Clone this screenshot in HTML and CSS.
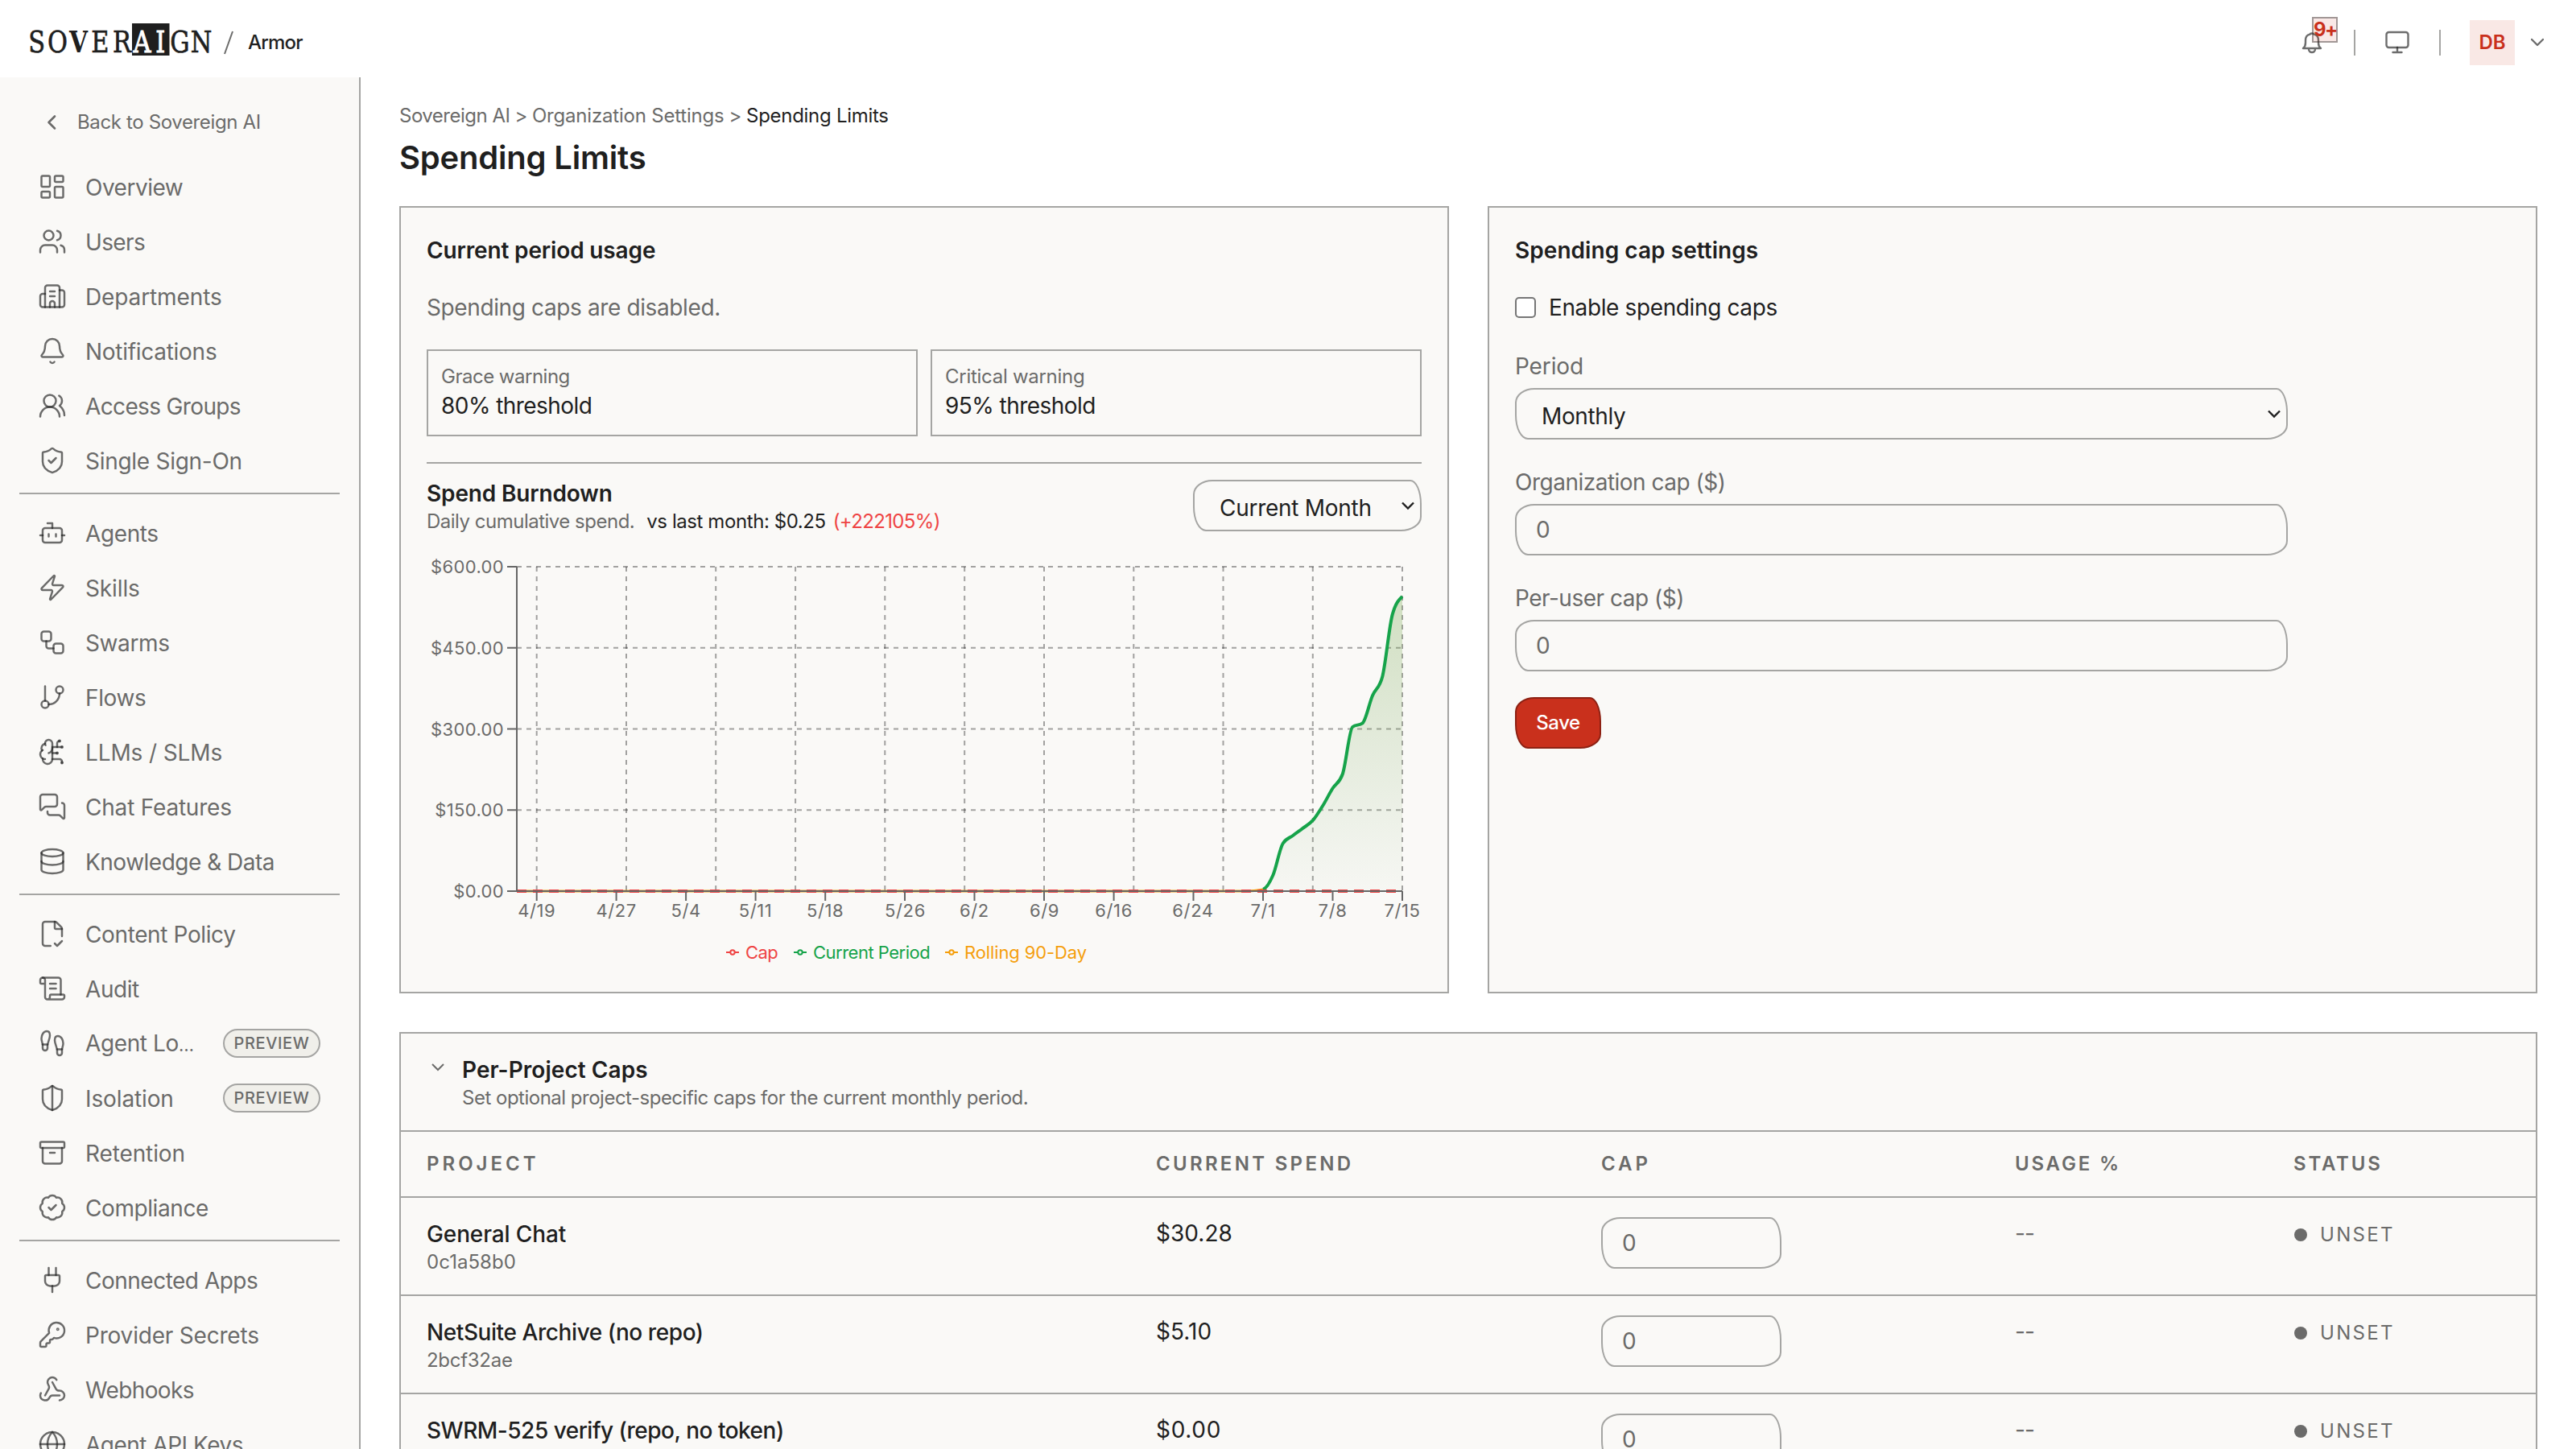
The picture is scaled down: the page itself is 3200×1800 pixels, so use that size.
FILE: index.html
```html
<!DOCTYPE html>
<html lang="en">
<head>
<meta charset="utf-8">
<title>Spending Limits</title>
<link rel="stylesheet" href="styles.css">
</head>
<body>
<header class="topbar">
  <svg class="logo" viewBox="36 29 228 48">
    <rect x="164" y="29" width="46.5" height="40" class="logo-box"/>
    <g transform="scale(.8 1)">
      <text y="65.5" class="logo-text"><tspan x="57">S</tspan><tspan x="89.4">O</tspan><tspan x="121.9" class="heavy">V</tspan><tspan x="155.6">E</tspan><tspan x="189.4">R</tspan><tspan x="220.6" class="inv">A</tspan><tspan x="249" class="inv">I</tspan><tspan x="279.4">G</tspan><tspan x="312.500">N</tspan></text>
    </g>
  </svg>
  <svg class="slash" viewBox="0 0 12 30"><path d="M1 29L11 1"/></svg>
  <span class="product">Armor</span>
  <div class="tools">
    <div class="bell">
      <svg viewBox="0 0 32 32"><path d="M5 23c2-1.500 3-3.500 3-7v-3c0-4 2-6.500 5.500-7.300c.3-1.700 4.700-1.700 5 0C22 6.500 24 9 24 13v3c0 3.500 1 5.500 3 7zM12 24c0 5.300 8 5.300 8 0"/></svg>
      <span class="badge">9+</span>
    </div>
    <i class="sep sep-a"></i>
    <svg class="monitor" viewBox="0 0 36 36"><rect x="4.500" y="5" width="27" height="19" rx="3"/><path d="M18 24v6M12.500 30h11"/></svg>
    <i class="sep sep-b"></i>
    <span class="avatar">DB</span>
    <svg class="caret" viewBox="0 0 16 12"><path d="M1 2l7 7 7-7"/></svg>
  </div>
</header>

<div class="shell">
  <nav class="sidebar">
    <a class="back"><svg viewBox="0 0 24 24"><path d="M16 4.500L8.500 12l7.500 7.500"/></svg><span>Back to Sovereign AI</span></a>
    <div class="group">
      <a class="item"><svg viewBox="0 0 24 24"><rect width="7" height="9" x="3" y="3" rx="1"/><rect width="7" height="5" x="14" y="3" rx="1"/><rect width="7" height="9" x="14" y="12" rx="1"/><rect width="7" height="5" x="3" y="16" rx="1"/></svg><span class="t5">Overview</span></a>
      <a class="item"><svg viewBox="0 0 24 24"><path d="M16 21v-2a4 4 0 0 0-4-4H6a4 4 0 0 0-4 4v2"/><circle cx="9" cy="7" r="4"/><path d="M22 21v-2a4 4 0 0 0-3-3.870M16 3.130a4 4 0 0 1 0 7.750"/></svg><span class="t6">Users</span></a>
      <a class="item"><svg viewBox="0 0 24 24"><path d="M10 12h4"/><path d="M10 8h4"/><path d="M14 21v-3a2 2 0 0 0-4 0v3"/><path d="M6 10H4a2 2 0 0 0-2 2v7a2 2 0 0 0 2 2h16a2 2 0 0 0 2-2V9a2 2 0 0 0-2-2h-2"/><path d="M6 21V5a2 2 0 0 1 2-2h8a2 2 0 0 1 2 2v16"/></svg><span class="t1">Departments</span></a>
      <a class="item"><svg viewBox="0 0 24 24"><path d="M10.268 21a2 2 0 0 0 3.464 0"/><path d="M3.262 15.326A1 1 0 0 0 4 17h16a1 1 0 0 0 .740-1.673C19.410 13.956 18 12.499 18 8A6 6 0 0 0 6 8c0 4.499-1.411 5.956-2.738 7.326"/></svg><span class="t3">Notifications</span></a>
      <a class="item"><svg viewBox="0 0 24 24"><path d="M18 21a8 8 0 0 0-16 0"/><circle cx="10" cy="8" r="5"/><path d="M22 20c0-3.370-2-6.500-4-8a5 5 0 0 0-.450-8.300"/></svg><span class="t6">Access Groups</span></a>
      <a class="item"><svg viewBox="0 0 24 24"><path d="M20 13c0 5-3.500 7.500-7.660 8.950a1 1 0 0 1-.670-.010C7.500 20.500 4 18 4 13V6a1 1 0 0 1 1-1c2 0 4.500-1.200 6.240-2.720a1.170 1.170 0 0 1 1.520 0C14.510 3.810 17 5 19 5a1 1 0 0 1 1 1z"/><path d="m9 12 2 2 4-4"/></svg><span class="t3">Single Sign-On</span></a>
    </div>
    <div class="group">
      <a class="item"><svg viewBox="0 0 24 24"><path d="M12 8V4H8"/><rect width="16" height="12" x="4" y="8" rx="2"/><path d="M2 14h2"/><path d="M20 14h2"/><path d="M15 13v2M9 13v2"/></svg><span>Agents</span></a>
      <a class="item"><svg viewBox="0 0 24 24"><path d="M4 14a1 1 0 0 1-.780-1.630l9.900-10.200a.5.5 0 0 1 .860.460l-1.920 6.020A1 1 0 0 0 13 10h7a1 1 0 0 1 .780 1.630l-9.900 10.200a.5.5 0 0 1-.860-.460l1.920-6.020A1 1 0 0 0 11 14z"/></svg><span class="t1">Skills</span></a>
      <a class="item"><svg viewBox="0 0 24 24"><rect width="8" height="8" x="3" y="3" rx="2"/><path d="M7 11v4a2 2 0 0 0 2 2h4"/><rect width="8" height="8" x="13" y="13" rx="2"/></svg><span>Swarms</span></a>
      <a class="item"><svg viewBox="0 0 24 24"><path d="M6 3v12"/><circle cx="18" cy="6" r="3"/><circle cx="6" cy="18" r="3"/><path d="M18 9a9 9 0 0 1-9 9"/></svg><span>Flows</span></a>
      <a class="item"><svg viewBox="0 0 24 24"><path d="M12 5a3 3 0 1 0-5.997.125 4 4 0 0 0-2.526 5.770 4 4 0 0 0 .556 6.588A4 4 0 1 0 12 18Z"/><path d="M9 13a4.500 4.500 0 0 0 3-4"/><path d="M6.003 5.125A3 3 0 0 0 6.401 6.500"/><path d="M3.477 10.896a4 4 0 0 1 .585-.396"/><path d="M6 18a4 4 0 0 1-1.967-.516"/><path d="M12 13h4"/><path d="M12 18h6a2 2 0 0 1 2 2v1"/><path d="M12 8h8"/><path d="M16 8V5a2 2 0 0 1 2-2"/><circle cx="16" cy="13" r=".5"/><circle cx="18" cy="3" r=".5"/><circle cx="20" cy="21" r=".5"/><circle cx="20" cy="8" r=".5"/></svg><span class="t1">LLMs / SLMs</span></a>
      <a class="item"><svg viewBox="0 0 24 24"><path d="M16 10a2 2 0 0 1-2 2H6.828a2 2 0 0 0-1.414.586l-2.202 2.202A.710.710 0 0 1 2 14.286V4a2 2 0 0 1 2-2h10a2 2 0 0 1 2 2z"/><path d="M20 9a2 2 0 0 1 2 2v10.286a.710.710 0 0 1-1.212.502l-2.202-2.202A2 2 0 0 0 17.172 19H10a2 2 0 0 1-2-2v-1"/></svg><span class="t2">Chat Features</span></a>
      <a class="item"><svg viewBox="0 0 24 24"><ellipse cx="12" cy="5" rx="9" ry="3"/><path d="M3 5V19A9 3 0 0 0 21 19V5"/><path d="M3 12A9 3 0 0 0 21 12"/></svg><span class="t5">Knowledge &amp; Data</span></a>
    </div>
    <div class="group">
      <a class="item"><svg viewBox="0 0 24 24"><path d="M10.500 22H6a2 2 0 0 1-2-2V4a2 2 0 0 1 2-2h8a2.400 2.400 0 0 1 1.706.706l3.588 3.588A2.400 2.400 0 0 1 20 8v6"/><path d="M14 2v5a1 1 0 0 0 1 1h5"/><path d="m14 20 2 2 4-4"/></svg><span>Content Policy</span></a>
      <a class="item"><svg viewBox="0 0 24 24"><path d="M15 12h-5"/><path d="M15 8h-5"/><path d="M19 17V5a2 2 0 0 0-2-2H4"/><path d="M8 21h12a2 2 0 0 0 2-2v-1a1 1 0 0 0-1-1H11a1 1 0 0 0-1 1v1a2 2 0 1 1-4 0V5a2 2 0 1 0-4 0v2a1 1 0 0 0 1 1h3"/></svg><span class="t4">Audit</span></a>
      <a class="item"><svg viewBox="0 0 24 24"><path d="M4 16v-2.380C4 11.500 2.970 10.500 3 8c.030-2.720 1.490-6 4.500-6C9.370 2 10 3.800 10 5.500c0 3.110-2 5.660-2 8.680V16a2 2 0 1 1-4 0Z"/><path d="M20 20v-2.380c0-2.120 1.030-3.120 1-5.620-.030-2.720-1.490-6-4.500-6C14.630 6 14 7.800 14 9.500c0 3.110 2 5.660 2 8.680V20a2 2 0 1 0 4 0Z"/><path d="M16 17h4"/><path d="M4 13h4"/></svg><span>Agent Lo<span class="dots">…</span></span><b class="pill">PREVIEW</b></a>
      <a class="item"><svg viewBox="0 0 24 24"><path d="M20 13c0 5-3.500 7.500-7.660 8.950a1 1 0 0 1-.670-.010C7.500 20.500 4 18 4 13V6a1 1 0 0 1 1-1c2 0 4.500-1.200 6.240-2.720a1.170 1.170 0 0 1 1.520 0C14.510 3.810 17 5 19 5a1 1 0 0 1 1 1z"/><path d="M12 22V2"/></svg><span class="t1">Isolation</span><b class="pill">PREVIEW</b></a>
      <a class="item"><svg viewBox="0 0 24 24"><rect width="20" height="5" x="2" y="3" rx="1"/><path d="M4 8v11a2 2 0 0 0 2 2h12a2 2 0 0 0 2-2V8"/><path d="M10 12h4"/></svg><span class="t1">Retention</span></a>
      <a class="item"><svg viewBox="0 0 24 24"><path d="M3.850 8.620a4 4 0 0 1 4.780-4.770 4 4 0 0 1 6.740 0 4 4 0 0 1 4.780 4.780 4 4 0 0 1 0 6.740 4 4 0 0 1-4.770 4.780 4 4 0 0 1-6.750 0 4 4 0 0 1-4.780-4.770 4 4 0 0 1 0-6.760Z"/><path d="m9 12 2 2 4-4"/></svg><span class="t4">Compliance</span></a>
    </div>
    <div class="group">
      <a class="item"><svg viewBox="0 0 24 24"><path d="M12 22v-5"/><path d="M15 8V2"/><path d="M17 8a1 1 0 0 1 1 1v4a4 4 0 0 1-4 4h-4a4 4 0 0 1-4-4V9a1 1 0 0 1 1-1z"/><path d="M9 8V2"/></svg><span class="t5">Connected Apps</span></a>
      <a class="item"><svg viewBox="0 0 24 24"><path d="M2.586 17.414A2 2 0 0 0 2 18.828V21a1 1 0 0 0 1 1h3a1 1 0 0 0 1-1v-1a1 1 0 0 1 1-1h1a1 1 0 0 0 1-1v-1a1 1 0 0 1 1-1h.172a2 2 0 0 0 1.414-.586l.814-.814a6.500 6.500 0 1 0-4-4z"/><circle cx="16.500" cy="7.500" r=".5"/></svg><span class="t2">Provider Secrets</span></a>
      <a class="item"><svg viewBox="0 0 24 24"><path d="M18 16.980h-5.990c-1.100 0-1.950.940-2.480 1.900A4 4 0 0 1 2 17c.010-.700.200-1.400.570-2"/><path d="m6 17 3.130-5.780c.530-.970.100-2.180-.500-3.100a4 4 0 1 1 6.890-4.060"/><path d="m12 6 3.130 5.730C15.660 12.700 16.900 13 18 13a4 4 0 0 1 0 8"/></svg><span class="t6">Webhooks</span></a>
      <a class="item"><svg viewBox="0 0 24 24"><circle cx="12" cy="12" r="10"/><path d="M12 2a14.500 14.500 0 0 0 0 20 14.500 14.500 0 0 0 0-20"/><path d="M2 12h20"/></svg><span class="t5">Agent API Keys</span></a>
    </div>
  </nav>

  <main class="main">
    <div class="crumbs"><span class="t5">Sovereign AI</span><span>&gt;</span><span class="t2">Organization Settings</span><span>&gt;</span><span class="here t3">Spending Limits</span></div>
    <h1>Spending Limits</h1>

    <div class="cards">
      <section class="card">
        <h2>Current period usage</h2>
        <p class="note">Spending caps are disabled.</p>
        <div class="warnings">
          <div class="warning"><small class="t5">Grace warning</small><span>80% threshold</span></div>
          <div class="warning"><small class="t3">Critical warning</small><span>95% threshold</span></div>
        </div>
        <div class="burndown-head">
          <div>
            <h2>Spend Burndown</h2>
            <p class="compare"><span class="t5">Daily cumulative spend.</span><span class="dark t4">vs last month: $0.25</span><span class="red t6">(+222105%)</span></p>
          </div>
          <div class="field select range"><span class="t3">Current Month</span><svg viewBox="0 0 20 20"><path d="M3 6.500l7 7 7-7"/></svg></div>
        </div>
        <svg class="chart" viewBox="530 664 1236 503">
          <defs><linearGradient id="area" x1="0" y1="0" x2="0" y2="1"><stop offset="0" stop-color="#7fac57" stop-opacity=".34"/><stop offset="1" stop-color="#7fac6c" stop-opacity=".03"/></linearGradient></defs>
          <g class="grid">
            <path d="M642 704H1742"/><path d="M642 804.750H1742"/><path d="M642 905.500H1742"/><path d="M642 1006.250H1742"/>
            <path d="M666.700 704V1107"/><path d="M778 704V1107"/><path d="M889.200 704V1107"/><path d="M988.100 704V1107"/><path d="M1099.300 704V1107"/><path d="M1198.200 704V1107"/><path d="M1297 704V1107"/><path d="M1408.300 704V1107"/><path d="M1519.500 704V1107"/><path d="M1630.800 704V1107"/><path d="M1742 704V1107"/>
          </g>
          <path fill="url(#area)" d="M1568.970 1105C1573.090 1103.670 1577.210 1096.870 1581.330 1087.300C1585.450 1077.730 1589.570 1054.170 1593.690 1047.700C1597.810 1041.230 1601.930 1041.130 1606.050 1038C1610.170 1034.870 1614.290 1032.030 1618.410 1028.900C1622.530 1025.770 1626.650 1023.850 1630.770 1019.200C1634.890 1014.550 1639.010 1007.650 1643.130 1001C1647.250 994.350 1651.370 985.880 1655.490 979.300C1659.600 972.720 1663.720 973.370 1667.840 961.500C1671.960 949.630 1676.080 906.130 1680.200 903C1684.320 899.870 1688.440 901.430 1692.560 898.300C1696.680 895.170 1700.800 873.830 1704.920 864.200C1709.040 854.570 1713.160 856.300 1717.280 840.500C1721.400 824.700 1725.520 778.670 1729.640 763.600C1733.760 748.530 1737.880 744.770 1742 741V1107H1568.970Z"/>
          <path class="rolling" d="M642 1107H1544C1553 1107 1562 1106.500 1568.970 1105"/>
          <path class="current" d="M1568.970 1105C1573.090 1103.670 1577.210 1096.870 1581.330 1087.300C1585.450 1077.730 1589.570 1054.170 1593.690 1047.700C1597.810 1041.230 1601.930 1041.130 1606.050 1038C1610.170 1034.870 1614.290 1032.030 1618.410 1028.900C1622.530 1025.770 1626.650 1023.850 1630.770 1019.200C1634.890 1014.550 1639.010 1007.650 1643.130 1001C1647.250 994.350 1651.370 985.880 1655.490 979.300C1659.600 972.720 1663.720 973.370 1667.840 961.500C1671.960 949.630 1676.080 906.130 1680.200 903C1684.320 899.870 1688.440 901.430 1692.560 898.300C1696.680 895.170 1700.800 873.830 1704.920 864.200C1709.040 854.570 1713.160 856.300 1717.280 840.500C1721.400 824.700 1725.520 778.670 1729.640 763.600C1733.760 748.530 1737.880 744.770 1742 741"/>
          <path class="cap" d="M642 1107H1742"/>
          <path class="axis" d="M642 704V1107M642 1107H1742M630 704H642M630 804.750H642M630 905.500H642M630 1006.250H642M630 1107H642M666.700 1107v12M765.600 1107v12M852.100 1107v12M938.600 1107v12M1025.200 1107v12M1124 1107v12M1210.500 1107v12M1297 1107v12M1383.600 1107v12M1482.500 1107v12M1569 1107v12M1655.500 1107v12M1742 1107v12"/>
          <g class="ylab"><text x="626" y="712">$600.00</text><text x="626" y="812.750">$450.00</text><text x="626" y="913.500">$300.00</text><text x="626" y="1014.250">$150.00</text><text x="626" y="1115">$0.00</text></g>
          <g class="xlab"><text x="666.700" y="1139">4/19</text><text x="765.600" y="1139">4/27</text><text x="852.100" y="1139">5/4</text><text x="938.600" y="1139">5/11</text><text x="1025.200" y="1139">5/18</text><text x="1124.500" y="1139">5/26</text><text x="1210.500" y="1139">6/2</text><text x="1297.500" y="1139">6/9</text><text x="1383.600" y="1139">6/16</text><text x="1482" y="1139">6/24</text><text x="1569" y="1139">7/1</text><text x="1655.500" y="1139">7/8</text><text x="1742" y="1139">7/15</text></g>
        </svg>
        <div class="legend">
          <span class="red"><svg viewBox="0 0 16 10"><path d="M0 5h5M11 5h5"/><circle cx="8" cy="5" r="2.700"/></svg><span class="t6">Cap</span></span>
          <span class="green"><svg viewBox="0 0 16 10"><path d="M0 5h5M11 5h5"/><circle cx="8" cy="5" r="2.700"/></svg><span class="t5">Current Period</span></span>
          <span class="amber"><svg viewBox="0 0 16 10"><path d="M0 5h5M11 5h5"/><circle cx="8" cy="5" r="2.700"/></svg><span class="t1">Rolling 90-Day</span></span>
        </div>
      </section>

      <section class="card">
        <h2 class="t0">Spending cap settings</h2>
        <label class="check"><i></i><span>Enable spending caps</span></label>
        <label class="control"><span class="t1">Period</span><span class="field select"><span>Monthly</span><svg viewBox="0 0 20 20"><path d="M3 6.500l7 7 7-7"/></svg></span></label>
        <label class="control"><span class="t5">Organization cap ($)</span><input class="field" placeholder="0"></label>
        <label class="control"><span class="t5">Per-user cap ($)</span><input class="field" placeholder="0"></label>
        <button class="save">Save</button>
      </section>
    </div>

    <section class="projects">
      <div class="projects-head">
        <svg viewBox="0 0 24 24"><path d="M5 8l7 7 7-7"/></svg>
        <div><h2 class="t0">Per-Project Caps</h2><p class="t5">Set optional project-specific caps for the current monthly period.</p></div>
      </div>
      <div class="row head"><span class="p1">PROJECT</span><span class="p2">CURRENT SPEND</span><span class="p1">CAP</span><span class="p3">USAGE %</span><span class="p3">STATUS</span></div>
      <div class="row">
        <div><b class="t1">General Chat</b><small class="t0">0c1a58b0</small></div><span class="t0">$30.28</span><div class="capcell"><input class="field" placeholder="0"></div><span class="usage">--</span><span class="status"><i></i>UNSET</span>
      </div>
      <div class="row">
        <div><b class="t4">NetSuite Archive (no repo)</b><small class="t3">2bcf32ae</small></div><span class="t0">$5.10</span><div class="capcell"><input class="field" placeholder="0"></div><span class="usage">--</span><span class="status"><i></i>UNSET</span>
      </div>
      <div class="row">
        <div><b class="t5">SWRM-525 verify (repo, no token)</b></div><span class="wide">$0.00</span><div class="capcell"><input class="field" placeholder="0"></div><span class="usage">--</span><span class="status"><i></i>UNSET</span>
      </div>
    </section>
  </main>
</div>
</body>
</html>
```
FILE: styles.css
```css
:root {
  --ink: #1f1f1f;
  --muted: #6b6b6a;
  --muted-a: rgba(31, 31, 31, .65);
  --line: #a5a5a3;
  --panel: #faf9f7;
  --brand: #c9301c;
  --wobble: 24px 14px 26px 16px / 18px 30px 18px 30px;
}
* { box-sizing: border-box; margin: 0; padding: 0; }
body {
  width: 3200px; height: 1800px; overflow: hidden;
  display: flex; flex-direction: column;
  background: #fff; color: var(--ink);
  font: 400 28px/40px Inter, "Liberation Sans", sans-serif;
  letter-spacing: -.38px;
}
svg { fill: none; flex: none; display: block; }
h2 { font-size: 28px; line-height: 40px; font-weight: 600; letter-spacing: -.15px; padding-top: 1px; margin-bottom: -1px; }
input, button { font: inherit; letter-spacing: inherit; }

/* letter-spacing steps, in tenths of a pixel, tighter as the number grows */
.t0 { letter-spacing: .05px; }
.t1 { letter-spacing: -.12px; }
.t2 { letter-spacing: -.2px; }
.t3 { letter-spacing: -.28px; }
.t4 { letter-spacing: -.42px; }
.t5 { letter-spacing: -.5px; }
.t6 { letter-spacing: -.64px; }
.wide { letter-spacing: .7px; }

/* top bar */
.topbar { height: 96px; flex: none; padding: 10px 40px 0 36px; display: flex; align-items: center; }
.logo { width: 228px; height: 48px; overflow: visible; }
.logo-box { fill: var(--ink); }
.logo-text { font: 400 38px "DejaVu Serif", serif; letter-spacing: 0; text-anchor: middle; fill: var(--ink); stroke: var(--ink); stroke-width: .7px; }
.logo-text .heavy { font-weight: 700; font-size: 37px; stroke: none; }
.logo-text .inv { fill: #fff; stroke: #fff; stroke-width: 1px; }
.slash { width: 12px; height: 30px; margin: 0 18px 0 14px; stroke: var(--muted); stroke-width: 2px; }
.product { font-size: 24px; font-weight: 500; letter-spacing: -.8px; }
.tools { margin-left: auto; display: flex; align-items: center; }
.tools svg { stroke: var(--muted-a); stroke-width: 2.4px; stroke-linecap: round; stroke-linejoin: round; }
.bell { position: relative; width: 32px; height: 32px; }
.bell svg { width: 32px; height: 32px; }
.badge {
  position: absolute; left: 16px; top: -16px; width: 32px; height: 32px;
  border: 2px solid rgba(31, 31, 31, .4); background: rgba(201, 48, 28, .11);
  color: var(--brand); font-size: 24px; font-weight: 700; line-height: 28px; text-align: center; letter-spacing: -1.6px;
}
.sep { width: 2px; height: 32px; background: var(--line); }
.sep-a { margin: 0 34px 0 36px; }
.sep-b { margin: 0 36px 0 34px; }
.monitor { width: 36px; height: 36px; }
.avatar { width: 56px; height: 56px; background: #f9e8e5; color: var(--brand); font-size: 24px; font-weight: 600; line-height: 56px; text-align: center; letter-spacing: 0; }
.caret { width: 16px; height: 12px; margin-left: 20px; }

.shell { flex: 1; min-height: 0; display: flex; }

/* sidebar */
.sidebar { width: 448px; flex: none; border-right: 2px solid var(--line); background: var(--panel); padding: 28px 24px 0; overflow: hidden; color: var(--muted); }
.sidebar svg { stroke: var(--muted-a); stroke-width: 1.65px; stroke-linecap: round; stroke-linejoin: round; }
.back { height: 56px; margin-bottom: 20px; padding-left: 28px; display: flex; align-items: center; gap: 20px; font-size: 24px; letter-spacing: -.36px; }
.sidebar .back svg { width: 24px; height: 24px; stroke-width: 2.6px; }
.group { width: 398px; display: flex; flex-direction: column; gap: 4px; }
.group + .group { margin-top: 8px; border-top: 2px solid var(--line); padding-top: 16px; }
.item { height: 64px; flex: none; padding-left: 23px; display: flex; align-items: center; gap: 23px; white-space: nowrap; }
.item svg { width: 36px; height: 36px; }
.item > span { padding-top: 2px; }
.dots { letter-spacing: 0; font-size: 22px; }
.pill { margin-left: auto; margin-right: 24px; width: 121px; height: 36px; border: 2px solid var(--line); border-radius: 18px; background: #f0efea; font-size: 20px; font-weight: 500; line-height: 32px; letter-spacing: .6px; text-align: center; }

/* main column */
.main { flex: 1; min-width: 0; padding: 32px 48px 0; overflow: hidden; }
.crumbs { height: 32px; display: flex; gap: 6px; font-size: 24px; line-height: 32px; color: var(--muted); }
.here { color: var(--ink); }
h1 { margin: 8px 0 32px; font-size: 40px; line-height: 56px; font-weight: 600; letter-spacing: -.2px; }
.cards { display: grid; grid-template-columns: 1fr 1fr; gap: 48px; height: 978px; margin-bottom: 48px; }
.card { border: 2px solid var(--line); background: var(--panel); padding: 32px; }
.note { margin: 32px 0; color: var(--muted); }
.warnings { display: grid; grid-template-columns: 1fr 1fr; gap: 16px; }
.warning { height: 108px; border: 2px solid var(--line); padding: 16px; display: flex; flex-direction: column; letter-spacing: -.55px; }
small { font-size: 24px; line-height: 32px; color: var(--muted); }
.burndown-head { margin-top: 32px; border-top: 2px solid var(--line); padding-top: 16px; display: flex; justify-content: space-between; align-items: center; }
.compare { font-size: 24px; line-height: 32px; color: var(--muted); white-space: nowrap; }
.compare .dark { color: var(--ink); margin: 0 9px 0 15px; }
.red { color: #ef4444; }
.green { color: #16a34a; }
.amber { color: #f59e0b; }

.field { width: 100%; height: 64px; border: 2px solid var(--line); border-radius: var(--wobble); background: var(--panel); color: var(--ink); padding: 0 24px; outline: none; display: block; }
.field::placeholder { color: var(--muted); opacity: 1; }
.select { display: flex; align-items: center; justify-content: space-between; padding: 0 5px 0 31px; }
.select > span { padding-top: 5px; }
.select svg { width: 20px; height: 20px; stroke: var(--ink); stroke-width: 2.4px; }
.range { width: 284px; }

/* chart */
.chart { width: 1236px; height: 503px; font-size: 22px; }
.grid { stroke: rgba(31, 31, 31, .4); stroke-width: 2; stroke-dasharray: 6 6; }
.axis { stroke: #666; stroke-width: 2; }
.cap { stroke: #ef4444; stroke-width: 4; stroke-dasharray: 12 8; }
.rolling { stroke: #f59e0b; stroke-width: 3; }
.current { stroke: #16a34a; stroke-width: 4; }
.ylab, .xlab { fill: var(--muted); }
.ylab { text-anchor: end; letter-spacing: .35px; }
.xlab { text-anchor: middle; letter-spacing: .6px; }
.legend { height: 32px; padding-left: 372px; display: grid; grid-template-columns: 84px 188px auto; font-size: 22px; line-height: 32px; white-space: nowrap; }
.legend > span { display: flex; align-items: center; gap: 8px; }
.legend svg { width: 16px; height: 10px; stroke: currentColor; stroke-width: 2px; }

/* cap settings */
.check { margin-top: 32px; display: flex; align-items: center; gap: 16px; }
.check i { width: 26px; height: 26px; border: 2px solid #767676; border-radius: 5px; background: #fff; }
.control { display: block; width: 960px; margin-top: 32px; color: var(--muted); }
.control > span:first-child { display: block; padding-top: 1px; margin-bottom: 7px; }
.save { display: block; margin-top: 32px; width: 107px; height: 64px; border: 2px solid #8d2113; border-radius: var(--wobble); background: var(--brand); color: #fff; font-size: 24px; font-weight: 500; }

/* project table */
.projects { border: 2px solid var(--line); background: var(--panel); }
.projects-head { display: flex; gap: 18px; padding: 24px 32px 24px 34px; }
.projects-head svg { width: 24px; height: 24px; margin-top: 6px; stroke: var(--muted); stroke-width: 2px; }
.projects-head p { font-size: 24px; line-height: 32px; color: var(--muted); }
.row { display: grid; grid-template-columns: 906px 553px 514px 346px 333px; height: 122px; border-top: 2px solid var(--line); padding-top: 24px; }
.row > * { padding: 0 32px; }
.row b { display: block; font-weight: 500; padding-top: 1px; margin-bottom: -1px; }
.row small { display: block; }
.head { height: 82px; font-size: 24px; font-weight: 600; color: var(--muted); padding-top: 20px; }
.p1 { letter-spacing: 4px; }
.p2 { letter-spacing: 3.3px; }
.p3 { letter-spacing: 2.8px; }
.capcell .field { width: 224px; }
.usage { color: var(--muted); letter-spacing: -1px; }
.status { display: flex; align-items: center; height: 44px; font-size: 24px; color: var(--muted); letter-spacing: 2.3px; }
.status i { width: 16px; height: 16px; margin: 0 16px 0 1px; border-radius: 50%; background: var(--muted); }
```
